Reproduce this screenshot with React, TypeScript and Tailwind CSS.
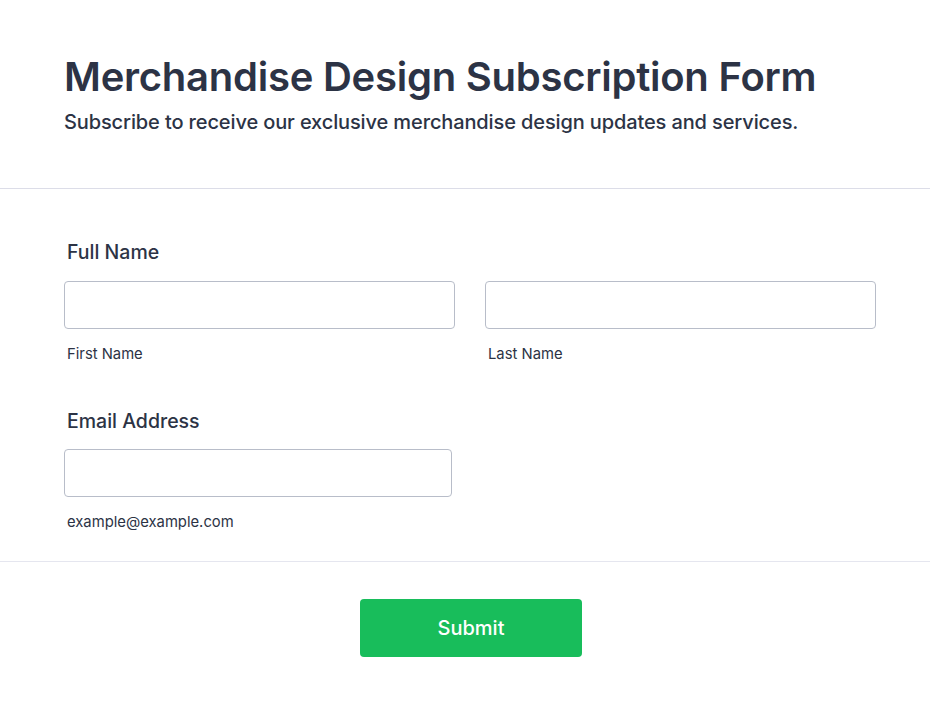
import React from 'react';

const font = { fontFamily: 'Inter, "Noto Sans", sans-serif' };

function Field({ label, width }: { label: string; width: string }) {
  return (
    <div className={`flex flex-col ${width}`}>
      <input
        type="text"
        className="h-[48px] w-full rounded-[4px] border border-[#b8bdc9] bg-white px-3 outline-none"
      />
      <span className="mt-[15px] pl-[3px] text-[14.8px] leading-[20px] text-[#2c3345]">{label}</span>
    </div>
  );
}

export default function App() {
  return (
    <div className="min-h-[707px] w-[930px] bg-white text-[#2c3345]" style={font}>
      <header className="border-b border-[#dcdde8] px-[64px] pt-[53px] pb-[52px]">
        <h1 className="text-[40px] font-semibold leading-[48px] tracking-[-0.25px]">
          Merchandise Design Subscription Form
        </h1>
        <p className="mt-[7px] text-[20px] font-medium leading-[28px] tracking-[-0.12px]">
          Subscribe to receive our exclusive merchandise design updates and services.
        </p>
      </header>

      <form className="border-b border-[#e5e6ef] pl-[64px] pr-[54px] pt-[49px] pb-[29px]">
        <label className="block pl-[3px] text-[19.5px] font-medium leading-[28px]">Full Name</label>
        <div className="mt-[15px] flex gap-[30px]">
          <Field label="First Name" width="w-[391px]" />
          <Field label="Last Name" width="w-[391px]" />
        </div>

        <label className="mt-[43px] block pl-[3px] text-[19.5px] font-medium leading-[28px]">
          Email Address
        </label>
        <div className="mt-[14px] flex">
          <Field label="example@example.com" width="w-[388px]" />
        </div>
      </form>

      <div className="flex justify-center pl-[12px] pt-[37px]">
        <button
          type="button"
          className="h-[58px] w-[222px] rounded-[4px] bg-[#18bd5b] text-[20px] font-medium text-white"
        >
          Submit
        </button>
      </div>
    </div>
  );
}
